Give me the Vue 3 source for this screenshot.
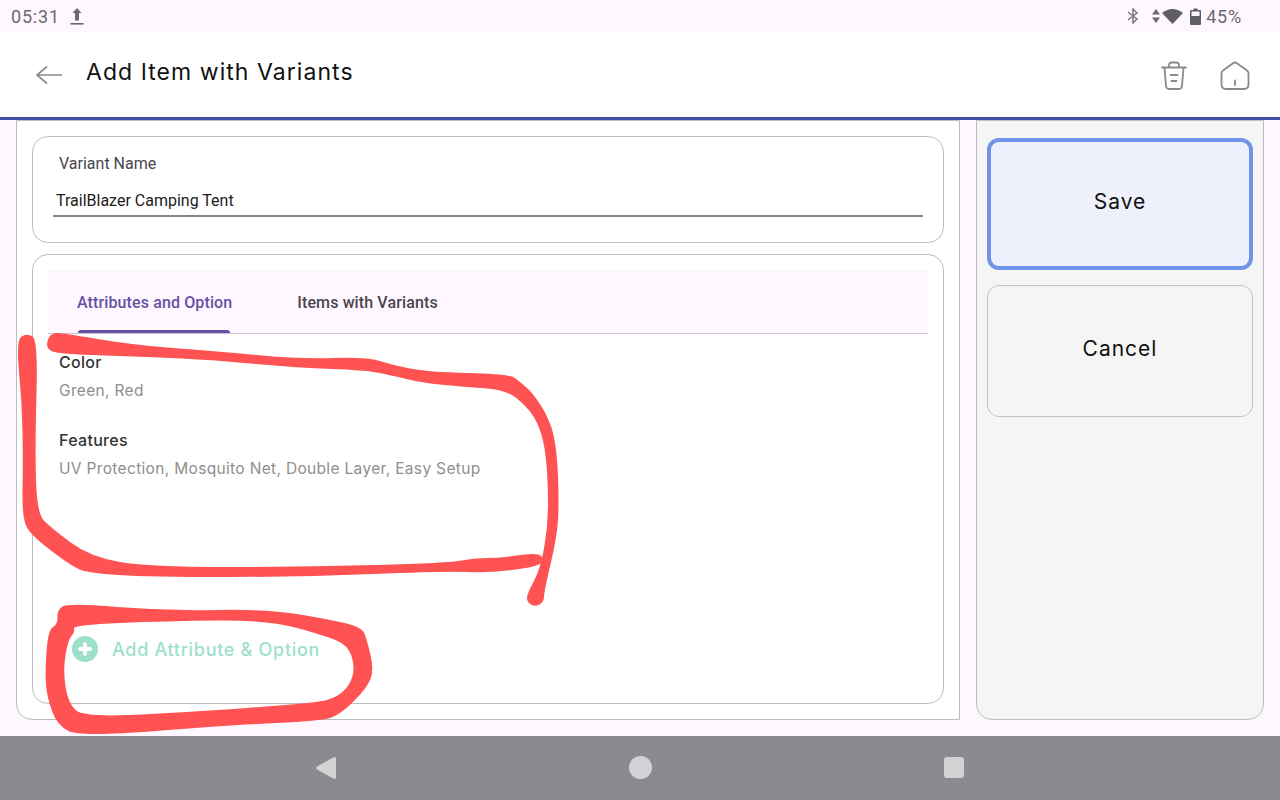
<script setup>
const attributes = [
  { name: "Color", options: "Green, Red" },
  { name: "Features", options: "UV Protection, Mosquito Net, Double Layer, Easy Setup" },
];

// closed smooth outline through a list of points (for the hand-drawn marks)
function smooth(points) {
  const mid = (a, b) => [(a[0] + b[0]) / 2, (a[1] + b[1]) / 2];
  const n = points.length;
  const start = mid(points[n - 1], points[0]);
  let d = `M${start[0]} ${start[1]}`;
  for (let i = 0; i < n; i++) {
    const m = mid(points[i], points[(i + 1) % n]);
    d += ` Q${points[i][0]} ${points[i][1]} ${m[0]} ${m[1]}`;
  }
  return d + " Z";
}

const topStroke = smooth([
  [47, 340], [52, 333], [62, 333], [133, 345], [213, 351], [300, 359], [367, 357], [393, 365], [427, 372],
  [510, 374], [520, 382], [533, 393], [550, 420], [557, 450], [559, 503], [557, 537], [544, 592], [544, 602],
  [535, 607], [527, 602], [527, 594], [540, 570], [548, 527], [548, 483], [545, 447], [538, 423], [527, 407],
  [507, 390], [467, 387], [423, 383], [390, 375], [363, 370], [300, 368], [213, 360], [150, 357], [58, 354], [47, 349],
]);

const sideStroke = smooth([
  [16, 340], [27, 333], [38, 340], [35, 447], [37, 513], [50, 527], [90, 557], [150, 567], [300, 567],
  [450, 563], [473, 558], [500, 558], [533, 553], [543, 556], [542, 566], [490, 573], [447, 571], [300, 577],
  [150, 577], [87, 573], [70, 565], [33, 537], [22, 520], [23, 463], [22, 403],
]);

const ringOuter = smooth([
  [57, 610], [68, 603], [167, 611], [267, 609], [327, 619], [362, 627], [367, 640], [374, 670], [367, 688],
  [340, 715], [320, 721], [233, 725], [80, 737], [57, 725], [47, 697], [45, 673], [48, 630], [58, 624],
]);

const ringInner = smooth([
  [73, 625], [167, 621], [267, 620], [323, 635], [348, 645], [355, 667], [350, 685], [337, 697], [317, 703],
  [177, 713], [83, 717], [68, 703], [63, 670], [68, 640], [75, 632],
]);
</script>

<template>
  <div class="screen">
    <!-- Status bar -->
    <div class="status-bar">
      <div class="status-left">
        <span class="clock">05:31</span>
        <svg class="upload" width="14" height="17" viewBox="0 0 14 17" fill="#6a6a6e">
          <path d="M7 0 L11.5 5 H9 V12.5 H5 V5 H2.5 Z" />
          <rect x="0.5" y="15" width="13" height="1.6" />
        </svg>
      </div>
      <div class="status-right">
        <svg width="14" height="18" viewBox="0 0 14 18" fill="none" stroke="#77777b" stroke-width="1.4">
          <path d="M2 5 L11 12 L7 16 V2 L11 6 L2 13" />
        </svg>
        <svg class="updown" width="8" height="16" viewBox="0 0 8 16" fill="#6a6a6e">
          <path d="M4 1 L8 6.5 H0 Z M4 15 L0 9.5 H8 Z" />
        </svg>
        <svg class="wifi" width="21" height="16" viewBox="0 0 21 16" fill="#5f5f63">
          <path d="M0 5 Q10.5 -3 21 5 L10.5 16 Z" />
        </svg>
        <svg class="battery" width="11" height="17" viewBox="0 0 11 17">
          <path d="M3.5 0.5 H7.5 V2 H10 Q11 2 11 3 V16 Q11 17 10 17 H1 Q0 17 0 16 V3 Q0 2 1 2 H3.5 Z" fill="#5f5f63" />
          <rect x="1.5" y="3.5" width="8" height="4.5" fill="#fef7ff" />
        </svg>
        <span class="percent">45%</span>
      </div>
    </div>

    <!-- App bar -->
    <header class="app-bar">
      <svg class="back" width="28" height="20" viewBox="0 0 28 20" fill="none" stroke="#8a8a8a" stroke-width="1.7">
        <path d="M2 10 H27 M12 1.5 L2 10 L12 18.5" />
      </svg>
      <h1 class="title">Add Item with Variants</h1>
      <div class="actions">
        <svg width="28" height="30" viewBox="0 0 28 30" fill="none" stroke="#8a8a8a" stroke-width="1.8" stroke-linecap="round">
          <path d="M2 6.5 H26 M9 6 V4.5 Q9 1.5 12 1.5 H16 Q19 1.5 19 4.5 V6 M4.5 7 L6 25 Q6.3 28 9 28 H19 Q21.7 28 22 25 L23.5 7 M10.5 14 H17.5 M11.5 20 H16.5" />
        </svg>
        <svg width="30" height="30" viewBox="0 0 30 30" fill="none" stroke="#8a8a8a" stroke-width="1.8" stroke-linecap="round" stroke-linejoin="round">
          <path d="M15 1.5 Q16 1.5 17 2.3 L27 9.5 Q28.5 10.7 28.5 12.5 V23.5 Q28.5 28 24 28 H6 Q1.5 28 1.5 23.5 V12.5 Q1.5 10.7 3 9.5 L13 2.3 Q14 1.5 15 1.5 Z M15 19.5 V24" />
        </svg>
      </div>
    </header>

    <!-- Content -->
    <main class="content">
      <section class="left-panel">
        <div class="card name-card">
          <div class="field-label">Variant Name</div>
          <div class="field-value">TrailBlazer Camping Tent</div>
        </div>

        <div class="card attr-card">
          <div class="tabs">
            <div class="tab active">Attributes and Option</div>
            <div class="tab">Items with Variants</div>
          </div>

          <div class="attr-list">
            <div v-for="attr in attributes" :key="attr.name" class="attr">
              <div class="attr-name">{{ attr.name }}</div>
              <div class="attr-options">{{ attr.options }}</div>
            </div>
          </div>

          <div class="add-row">
            <svg width="26" height="26" viewBox="0 0 26 26">
              <circle cx="13" cy="13" r="13" fill="#9ce0cc" />
              <path d="M13 8 V18 M8 13 H18" stroke="#fff" stroke-width="4" stroke-linecap="round" />
            </svg>
            <span class="add-text">Add Attribute &amp; Option</span>
          </div>
        </div>
      </section>

      <aside class="right-panel">
        <button class="btn save">Save</button>
        <button class="btn cancel">Cancel</button>
      </aside>
    </main>

    <!-- Navigation bar -->
    <nav class="nav-bar">
      <svg width="22" height="24" viewBox="0 0 22 24" fill="#d2d2d4">
        <path d="M19 1 Q21 0.5 21 3 V21 Q21 23.5 19 23 L2 13.5 Q0.5 12 2 10.5 Z" />
      </svg>
      <span class="nav-circle"></span>
      <span class="nav-square"></span>
    </nav>

    <!-- Red annotation drawn over the screenshot -->
    <svg class="scribble" width="1280" height="800" viewBox="0 0 1280 800" fill="#ff5252">
      <path :d="topStroke" />
      <path :d="sideStroke" />
      <path :d="ringOuter + ' ' + ringInner" fill-rule="evenodd" />
    </svg>
  </div>
</template>

<style scoped>
.screen {
  position: relative;
  width: 1280px;
  height: 800px;
  overflow: hidden;
  display: flex;
  flex-direction: column;
  background: #fef7ff;
  font-family: "Inter", "Liberation Sans", sans-serif;
}

.status-bar {
  height: 32px;
  flex-shrink: 0;
  display: flex;
  align-items: center;
  justify-content: space-between;
  padding: 0 38px 0 11px;
  font-family: "Roboto", sans-serif;
  color: #6a6a6e;
  font-size: 18px;
  letter-spacing: 0.8px;
}

.status-left,
.status-right {
  display: flex;
  align-items: center;
}

.upload {
  margin-left: 10px;
}

.status-right .updown {
  margin-left: 12px;
}

.wifi {
  margin-left: 2px;
}

.battery {
  margin-left: 7px;
}

.percent {
  margin-left: 5px;
}

.app-bar {
  height: 85px;
  flex-shrink: 0;
  display: flex;
  align-items: center;
  padding: 0 30px 0 35px;
  background: #fff;
  border-bottom: 3px solid #3f51a5;
}

.back {
  margin-top: 1px;
}

.title {
  margin: 0 0 6px 23px;
  font-size: 23px;
  font-weight: 400;
  color: #111;
  letter-spacing: 1.05px;
}

.actions {
  margin-left: auto;
  display: flex;
  align-items: center;
  gap: 32px;
  margin-top: 3px;
}

.content {
  flex: 1;
  min-height: 0;
  display: flex;
  gap: 16px;
  padding: 0 16px 16px;
}

.left-panel {
  width: 944px;
  box-sizing: border-box;
  border: 1px solid #bdbdbd;
  border-radius: 0 0 0 16px;
  background: #fff;
  padding: 15px 15px 15px;
  display: flex;
  flex-direction: column;
  gap: 11px;
}

.card {
  border: 1px solid #bdbdbd;
  border-radius: 16px;
  background: #fff;
}

.name-card {
  height: 107px;
  box-sizing: border-box;
  padding: 17px 20px 0;
}

.field-label {
  padding-left: 6px;
  font-family: "Roboto", sans-serif;
  font-size: 16px;
  line-height: 19px;
  color: #49454f;
}

.field-value {
  margin-top: 18px;
  padding: 0 3px 5px;
  border-bottom: 2px solid #858585;
  font-family: "Roboto", sans-serif;
  font-size: 16px;
  line-height: 19px;
  color: #1d1b20;
}

.attr-card {
  flex: 1;
  padding: 15px 15px 0;
  display: flex;
  flex-direction: column;
}

.tabs {
  height: 64px;
  flex-shrink: 0;
  box-sizing: border-box;
  display: flex;
  background: #fef7ff;
  border-bottom: 1px solid #cac4d0;
  padding-left: 29px;
  gap: 65px;
}

.tab {
  position: relative;
  line-height: 65px;
  font-family: "Roboto", sans-serif;
  font-size: 16px;
  font-weight: 500;
  letter-spacing: 0.12px;
  color: #49454f;
}

.tab.active {
  color: #6750a4;
}

.tab.active::after {
  content: "";
  position: absolute;
  left: 1px;
  right: 2px;
  top: 60px;
  height: 3px;
  background: #6750a4;
  border-radius: 3px 3px 0 0;
}

.attr-list {
  padding: 18px 11px 0;
}

.attr {
  margin-bottom: 29px;
}

.attr-name {
  font-size: 16px;
  line-height: 20px;
  font-weight: 500;
  letter-spacing: 0.3px;
  color: #333;
}

.attr-options {
  margin-top: 9px;
  font-size: 15.5px;
  line-height: 20px;
  letter-spacing: 0.33px;
  color: #8e8e8e;
}

.add-row {
  margin-top: 128px;
  padding-left: 24px;
  display: flex;
  align-items: center;
  gap: 14px;
}

.add-text {
  font-size: 18px;
  font-weight: 500;
  letter-spacing: 0.7px;
  color: #9ce0cc;
}

.right-panel {
  width: 288px;
  box-sizing: border-box;
  border: 1px solid #bdbdbd;
  border-radius: 0 0 16px 16px;
  background: #f5f5f5;
  padding: 17px 10px 0;
  display: flex;
  flex-direction: column;
  gap: 15px;
}

.btn {
  height: 132px;
  padding-bottom: 7px;
  border-radius: 12px;
  font-family: "Inter", "Liberation Sans", sans-serif;
  font-size: 21px;
  font-weight: 400;
  letter-spacing: 1px;
  color: #111;
}

.save {
  background: #eef0fb;
  border: 4px solid #6f93e8;
}

.cancel {
  background: #f5f5f5;
  border: 1px solid #c4c4c4;
}

.nav-bar {
  height: 64px;
  flex-shrink: 0;
  position: relative;
  background: #8b8a90;
}

.nav-bar svg {
  position: absolute;
  left: 315px;
  top: 20px;
}

.nav-circle {
  position: absolute;
  left: 629px;
  top: 20px;
  width: 23px;
  height: 23px;
  border-radius: 50%;
  background: #d2d2d4;
}

.nav-square {
  position: absolute;
  left: 944px;
  top: 21px;
  width: 20px;
  height: 21px;
  border-radius: 3px;
  background: #d2d2d4;
}

.scribble {
  position: absolute;
  left: 0;
  top: 0;
  pointer-events: none;
}
</style>
